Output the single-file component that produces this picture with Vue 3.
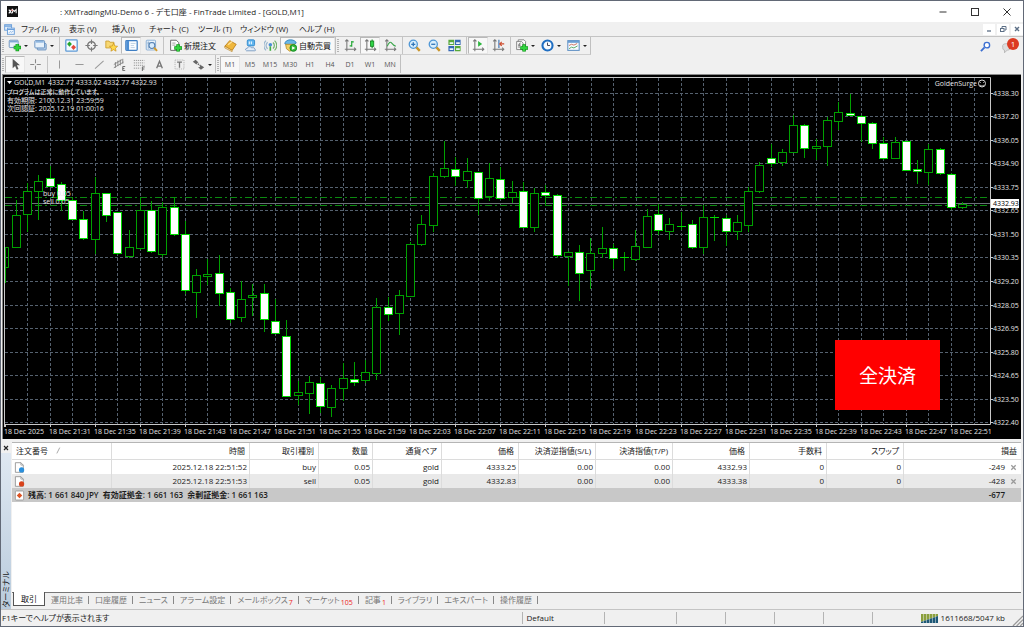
<script setup>
const menus = ['ファイル (F)', '表示 (V)', '挿入(I)', 'チャート (C)', 'ツール (T)', 'ウィンドウ (W)', 'ヘルプ (H)']

const mainGroups = [
  [
    { icon: 'newchart', label: '新規チャート', drop: true },
    { icon: 'profiles', label: 'プロファイル', drop: true }
  ],
  [
    { icon: 'market', label: '気配値' },
    { icon: 'target', label: 'データウィンドウ' },
    { icon: 'folder', label: 'ナビゲーター' },
    { icon: 'terminal', label: 'ターミナル', on: true },
    { icon: 'tester', label: 'ストラテジーテスター' }
  ],
  [
    { icon: 'order', label: '新規注文', text: true },
    { icon: 'book', label: 'メタエディター' },
    { icon: 'community', label: 'コミュニティ' },
    { icon: 'signal', label: 'シグナル' },
    { icon: 'auto', label: '自動売買', text: true, on: true }
  ]
]
const chartGroups = [
  [
    { icon: 'bars', label: 'バーチャート' },
    { icon: 'candles', label: 'ローソク足', on: true },
    { icon: 'line', label: 'ラインチャート' }
  ],
  [
    { icon: 'zoomin', label: '拡大' },
    { icon: 'zoomout', label: '縮小' },
    { icon: 'tile', label: '整列' }
  ],
  [
    { icon: 'scroll', label: '自動スクロール', on: true },
    { icon: 'shift', label: 'チャートシフト' }
  ],
  [
    { icon: 'indicator', label: 'インディケータ', drop: true },
    { icon: 'clock', label: '時間足設定', drop: true },
    { icon: 'template', label: '定型チャート', drop: true }
  ]
]
const drawGroups = [
  [
    { icon: 'cursor', label: 'カーソル', on: true },
    { icon: 'cross', label: 'クロスヘア' }
  ],
  [
    { icon: 'vline', label: '垂直線' },
    { icon: 'hline', label: '水平線' },
    { icon: 'trend', label: 'トレンドライン' },
    { icon: 'channel', label: 'チャネル' },
    { icon: 'fibo', label: 'フィボナッチ' },
    { icon: 'texta', label: 'テキスト' },
    { icon: 'textt', label: 'ラベル' },
    { icon: 'arrows', label: '矢印', drop: true }
  ]
]
const frames = ['M1', 'M5', 'M15', 'M30', 'H1', 'H4', 'D1', 'W1', 'MN']

// high, body top, body bottom, low, body kind (1 = bearish, 0 = bullish)
const candles = [
  [247, 247, 267, 282, 0], [200, 215, 247, 247, 0], [183, 191, 214, 231, 0], [175, 181, 191, 219, 0],
  [166, 178, 186, 186, 1], [182, 184, 200, 210, 1], [197, 200, 219, 219, 1], [211, 219, 238, 239, 1],
  [177, 193, 239, 253, 0], [193, 193, 215, 221, 1], [212, 212, 253, 254, 1], [230, 247, 256, 257, 0],
  [198, 210, 248, 249, 0], [201, 210, 251, 252, 1], [202, 207, 254, 256, 0], [197, 207, 234, 235, 1],
  [221, 234, 290, 293, 1], [269, 275, 292, 317, 0], [259, 274, 276, 284, 0], [255, 273, 293, 305, 1],
  [288, 292, 319, 322, 1], [281, 299, 317, 321, 0], [284, 295, 297, 315, 0], [284, 293, 319, 331, 1],
  [299, 321, 333, 333, 1], [320, 336, 396, 396, 1], [381, 392, 395, 404, 0], [376, 382, 393, 413, 0],
  [377, 383, 406, 412, 1], [385, 388, 407, 416, 0], [363, 378, 388, 400, 0], [362, 379, 382, 385, 1],
  [360, 372, 380, 382, 0], [298, 307, 373, 379, 0], [297, 307, 314, 320, 1], [290, 295, 313, 334, 0],
  [242, 244, 296, 296, 0], [215, 224, 244, 245, 0], [173, 176, 225, 231, 0], [141, 168, 176, 177, 0],
  [157, 169, 176, 185, 1], [158, 171, 180, 187, 0], [172, 172, 198, 214, 1], [163, 178, 196, 200, 0],
  [167, 179, 198, 199, 1], [181, 192, 197, 202, 0], [182, 191, 227, 227, 1], [188, 193, 227, 231, 0],
  [185, 192, 195, 205, 1], [194, 195, 255, 257, 1], [251, 252, 256, 285, 0], [245, 252, 273, 300, 1],
  [238, 253, 270, 288, 0], [227, 248, 253, 257, 0], [244, 248, 258, 268, 1], [252, 257, 257, 270, 0],
  [230, 246, 259, 260, 0], [209, 216, 247, 247, 0], [204, 214, 230, 234, 1], [218, 224, 231, 239, 0],
  [212, 226, 226, 229, 0], [220, 224, 247, 248, 1], [205, 217, 247, 253, 0], [215, 217, 217, 240, 0],
  [215, 218, 231, 245, 1], [215, 222, 231, 239, 0], [187, 191, 225, 231, 0], [162, 165, 191, 192, 0],
  [144, 158, 163, 166, 1], [149, 152, 162, 165, 0], [115, 125, 152, 152, 0], [124, 125, 148, 157, 1],
  [139, 146, 148, 159, 0], [117, 120, 146, 165, 0], [102, 112, 121, 129, 0], [94, 113, 115, 115, 1],
  [115, 116, 123, 141, 1], [122, 123, 143, 148, 1], [137, 143, 158, 159, 1], [137, 142, 158, 158, 0],
  [141, 141, 170, 170, 1], [160, 169, 171, 183, 1], [144, 149, 172, 184, 0], [148, 149, 173, 174, 1],
  [173, 174, 207, 209, 1], [202, 204, 207, 208, 0]
].map(([high, top, bottom, low, bear], i) => ({ x: Math.round(4.6 + i * 11.266), high, top, bottom, low, bear }))

const prices = ['4338.30', '4337.20', '4336.05', '4334.90', '4333.75', '4332.65', '4331.50', '4330.35',
  '4329.20', '4328.05', '4326.95', '4325.80', '4324.65', '4323.50', '4322.40']
  .map((label, i) => ({ label, y: Math.round(92.5 + i * 23.57) }))
const columns = Array.from({ length: 43 }, (_, i) => Math.round(27.2 + i * 22.532))
const times = Array.from({ length: 22 }, (_, i) => {
  const m = 27 + i * 4
  return {
    x: Math.round(4.6 + i * 45.065),
    label: i ? `18 Dec ${21 + Math.floor(m / 60)}:${String(m % 60).padStart(2, '0')}` : '18 Dec 2025'
  }
})

const heads = ['時間', '取引種別', '数量', '通貨ペア', '価格', '決済逆指値(S/L)', '決済指値(T/P)', '価格', '手数料', 'スワップ']
const orders = [
  { kind: 'buy', cells: ['2025.12.18 22:51:52', 'buy', '0.05', 'gold', '4333.25', '0.00', '0.00', '4332.93', '0', '0'], profit: '-249' },
  { kind: 'sell', cells: ['2025.12.18 22:51:53', 'sell', '0.05', 'gold', '4332.83', '0.00', '0.00', '4333.38', '0', '0'], profit: '-428' }
]
const tabs = [['運用比率'], ['口座履歴'], ['ニュース'], ['アラーム設定'], ['メールボックス', '7'], ['マーケット', '105'],
  ['記事', '1'], ['ライブラリ'], ['エキスパート'], ['操作履歴']]
</script>

<template>
  <div class="window">
    <svg class="defs" aria-hidden="true">
      <symbol id="i-newchart" viewBox="0 0 16 16"><rect x="1.5" y="1.5" width="11" height="9" rx="1" fill="#e9f2fb" stroke="#5b86b8"/><path d="M2 3.2h10" stroke="#7fa8d6" stroke-width="2"/><path d="M7 10.500h9M11.500 6v9" stroke="#118a1a" stroke-width="4.400"/><path d="M7.500 10.500h8M11.500 6.500v8" stroke="#2fd23c" stroke-width="2.800"/></symbol>
      <symbol id="i-profiles" viewBox="0 0 16 16"><rect x="4" y="5.500" width="11" height="8" rx="1" fill="#b9d0ea" stroke="#5b86b8"/><rect x="1" y="2" width="12" height="9" rx="1" fill="#e6f1fb" stroke="#4f80b6"/><path d="M2 3.500h10" stroke="#8db5df" stroke-width="2"/></symbol>
      <symbol id="i-market" viewBox="0 0 16 16"><rect x="1" y="1" width="14" height="14" rx="1" fill="#f5faff" stroke="#5f9bd6" stroke-width="1.600"/><path d="M5.500 3l3 3.200-3 3.200-3-3.200z" fill="#24a52c"/><path d="M10.500 7l3 3.200-3 3.200-3-3.200z" fill="#e4483a"/></symbol>
      <symbol id="i-target" viewBox="0 0 16 16"><circle cx="8" cy="8" r="4.700" fill="none" stroke="#7a7a7a" stroke-width="1.800"/><path d="M8 0.500v5.500M8 10v5.500M0.500 8H6M10 8h5.500" stroke="#7a7a7a" stroke-width="1.400"/></symbol>
      <symbol id="i-folder" viewBox="0 0 16 16"><path d="M1 2.500h4l1 1.500h5V11H1z" fill="#f8d872" stroke="#c89a2a"/><path d="M10.500 5l1.500 3.500 3.500.500-2.600 2.400.700 3.600-3.100-1.900-3.200 1.900.700-3.600L5.500 9l3.600-.500z" fill="#ffd84a" stroke="#c58d17" stroke-width=".8"/></symbol>
      <symbol id="i-terminal" viewBox="0 0 16 16"><rect x="1" y="2" width="14" height="12" rx="1" fill="#fafdff" stroke="#3f7fc4" stroke-width="1.500"/><rect x="1.500" y="2.500" width="3.500" height="11" fill="#4d8ed3"/><path d="M7 5.500h6M7 8h4M7 10.500h5" stroke="#b8cde2"/></symbol>
      <symbol id="i-tester" viewBox="0 0 16 16"><rect x="1.500" y="1.500" width="11.500" height="12" rx="1" fill="#eaf3fc" stroke="#79a4d0"/><path d="M3 5h8M4 3v9" stroke="#7aa0c8"/><circle cx="8.500" cy="8" r="3.600" fill="#d5eafc" fill-opacity=".8" stroke="#5682b4" stroke-width="1.300"/><path d="M11.200 10.800l3.600 3.800" stroke="#d19b2d" stroke-width="2.400"/></symbol>
      <symbol id="i-order" viewBox="0 0 16 16"><path d="M2 1.500h7l3 3v9.500H2z" fill="#fff" stroke="#6b6b6b" stroke-width="1.200"/><path d="M4 5h4M4 7.500h4" stroke="#8a8a8a"/><path d="M6.500 11h9.500M11.200 6.500v9" stroke="#108a19" stroke-width="4.400"/><path d="M7 11h8.500M11.200 7v8" stroke="#31d33e" stroke-width="2.800"/></symbol>
      <symbol id="i-book" viewBox="0 0 16 16"><path d="M1 9l6-7 8 4.500-5 7.500z" fill="#efb73d" stroke="#b77a12"/><path d="M1 9l9 5v1.500L1 11z" fill="#fff3cf" stroke="#b77a12" stroke-width=".8"/><path d="M5 7l5-4" stroke="#ffe39a" stroke-width="1.400"/></symbol>
      <symbol id="i-community" viewBox="0 0 16 16"><rect x="4" y="1" width="9" height="7.500" rx="1.500" fill="#61b5ee" stroke="#2581c9"/><path d="M6.500 3v3.500M9 3v3.500" stroke="#fff" stroke-width="1.200"/><path d="M3 14.500c-2-1-1-3.500 1-3 .500-2.500 4.500-2.800 5.500-.500 2-1 4 0 3.500 1.500 1.800.300 1.500 2 .300 2z" fill="#e3edf8" stroke="#6e93bd"/></symbol>
      <symbol id="i-signal" viewBox="0 0 16 16"><path d="M4.500 12A5 5 0 0 1 4.500 4M2.500 14A8 8 0 0 1 2.500 2" fill="none" stroke="#9ab6cf" stroke-width="1.500"/><path d="M11 4.200a5 5 0 0 1 0 7.600M13 2a8 8 0 0 1 0 12" fill="none" stroke="#74b36e" stroke-width="1.500"/><circle cx="7.800" cy="7" r="2.200" fill="#4c8fd6"/><path d="M7.800 9v5.500" stroke="#3fae42" stroke-width="2"/></symbol>
      <symbol id="i-auto" viewBox="0 0 16 16"><path d="M1 6c0-3 3-5 7-5s7 2 7 4l-3 2H4z" fill="#69b7e6" stroke="#2d7eb5"/><path d="M2 6.500h11l-2 7-4 1.500-4-3z" fill="#f3d063" stroke="#b98a24"/><circle cx="11.500" cy="11" r="4.200" fill="#35b83c" stroke="#0b851a"/><path d="M10 8.800v4.400l3.800-2.200z" fill="#fff"/></symbol>
      <symbol id="i-bars" viewBox="0 0 16 16"><path d="M3.500 1v14M1 12.500h13M1.500 3l2-2 2 2M12.500 10.500l2 2-2 2" fill="none" stroke="#777" stroke-width="1.300"/><path d="M9.500 2.500v7M9.500 3.500h2.500M7 8.500h2.500" stroke="#1fa632" stroke-width="1.400"/></symbol>
      <symbol id="i-candles" viewBox="0 0 16 16"><path d="M3.500 1v14M1 12.500h13M1.500 3l2-2 2 2M12.500 10.500l2 2-2 2" fill="none" stroke="#777" stroke-width="1.300"/><path d="M10 0.500v11" stroke="#13821f" stroke-width="1.300"/><rect x="8" y="2.500" width="4" height="6.500" fill="#2fd546" stroke="#13821f"/></symbol>
      <symbol id="i-line" viewBox="0 0 16 16"><path d="M3.500 1v14M1 12.500h13M1.500 3l2-2 2 2M12.500 10.500l2 2-2 2" fill="none" stroke="#777" stroke-width="1.300"/><path d="M4 9c2-5 4-6 5.500-4s2.500 3 5 4" fill="none" stroke="#3ba64b" stroke-width="1.300"/></symbol>
      <symbol id="i-zoomin" viewBox="0 0 16 16"><path d="M9.500 9.500l5 5" stroke="#c9952b" stroke-width="3"/><circle cx="6.500" cy="6.500" r="5" fill="#d9effc" stroke="#4f97d6" stroke-width="1.600"/><path d="M4 6.500h5M6.500 4v5" stroke="#2f74b8" stroke-width="1.600"/></symbol>
      <symbol id="i-zoomout" viewBox="0 0 16 16"><path d="M9.500 9.500l5 5" stroke="#c9952b" stroke-width="3"/><circle cx="6.500" cy="6.500" r="5" fill="#d9effc" stroke="#4f97d6" stroke-width="1.600"/><path d="M4 6.500h5" stroke="#2f74b8" stroke-width="1.600"/></symbol>
      <symbol id="i-tile" viewBox="0 0 16 16"><path d="M0.500 1h7v6.500h-7zM8.500 8.500h7V15h-7z" fill="#58a83a"/><path d="M8.500 1h7v6.500h-7zM0.500 8.500h7V15h-7z" fill="#3468b4"/><path d="M2 4h4.500v2H2zM10 4h4.500v2H10zM2 11.500h4.500v2H2zM10 11.500h4.500v2H10z" fill="#eef5fb"/></symbol>
      <symbol id="i-scroll" viewBox="0 0 16 16"><path d="M3.500 1v14M1 12.500h13M1.500 3l2-2 2 2M12.500 10.500l2 2-2 2" fill="none" stroke="#777" stroke-width="1.300"/><path d="M7.500 2.500l5 3.500-5 3.500z" fill="#2cb53d"/></symbol>
      <symbol id="i-shift" viewBox="0 0 16 16"><path d="M3.500 1v14M1 12.500h13M1.500 3l2-2 2 2M12.500 10.500l2 2-2 2" fill="none" stroke="#777" stroke-width="1.300"/><path d="M8.500 1v10" stroke="#3b75b5" stroke-width="1.400"/><path d="M15 6h-5M12 3.500L9.500 6 12 8.500" fill="none" stroke="#cd4a2b" stroke-width="1.400"/></symbol>
      <symbol id="i-indicator" viewBox="0 0 16 16"><path d="M4 1h7l2 2v9H4z" fill="#fff" stroke="#777"/><path d="M2 3h6l2 2v8H2z" fill="#f4f4f4" stroke="#777"/><path d="M7 5c-2 0-2 1-2 6M4 7.500h3" fill="none" stroke="#555"/><path d="M6.500 11h9.500M11.200 6.500v9" stroke="#108a19" stroke-width="4.400"/><path d="M7 11h8.500M11.200 7v8" stroke="#31d33e" stroke-width="2.800"/></symbol>
      <symbol id="i-clock" viewBox="0 0 16 16"><circle cx="8" cy="8" r="6.200" fill="#f7fbff" stroke="#1f6ec2" stroke-width="2.600"/><path d="M8 4.500V8h3" fill="none" stroke="#445" stroke-width="1.200"/></symbol>
      <symbol id="i-template" viewBox="0 0 16 16"><rect x="1" y="2" width="14" height="12" fill="#f7fbff" stroke="#6091c4" stroke-width="1.300"/><path d="M1 3.500h14" stroke="#6a9dd2" stroke-width="2.400"/><path d="M2.500 8l3-1.500 3 1 4-2" fill="none" stroke="#c65a42"/><path d="M2.500 12l3-2 3 1 4.500-2.500" fill="none" stroke="#3fa04b"/></symbol>
      <symbol id="i-cursor" viewBox="0 0 16 16"><path d="M4.500 1v11.500l3-2.700 2 4.700 2.200-1-2-4.500h3.800z" fill="#555"/></symbol>
      <symbol id="i-cross" viewBox="0 0 16 16"><path d="M8 1.500v5M8 9.500v5M1.500 8h5M9.500 8h5" stroke="#888" stroke-width="1.300"/></symbol>
      <symbol id="i-vline" viewBox="0 0 16 16"><path d="M8 3v10" stroke="#999" stroke-width="1.300"/></symbol>
      <symbol id="i-hline" viewBox="0 0 16 16"><path d="M3 8h10" stroke="#999" stroke-width="1.300"/></symbol>
      <symbol id="i-trend" viewBox="0 0 16 16"><path d="M2.500 13L13 3.500" stroke="#999" stroke-width="1.300"/></symbol>
      <symbol id="i-channel" viewBox="0 0 16 16"><path d="M1 8L11 2M1 12L13 5M3 5v7M6 3v7M9 2v7M12 1v6" stroke="#888" stroke-width="1.200"/><path d="M15 10.500h-3v5H15M12 13H14" fill="none" stroke="#666" stroke-width="1.200"/></symbol>
      <symbol id="i-fibo" viewBox="0 0 16 16"><path d="M1 3h13M1 6h13M1 9h13M1 12.500h8" stroke="#999" stroke-width="1.200" stroke-dasharray="1.500 1"/><path d="M14.500 11H11.500v5M11.500 13.500h2.500" fill="none" stroke="#666" stroke-width="1.200"/></symbol>
      <symbol id="i-texta" viewBox="0 0 16 16"><path d="M4.500 12.500L8 4l3.500 8.500M6 10h4" fill="none" stroke="#777" stroke-width="1.700"/></symbol>
      <symbol id="i-textt" viewBox="0 0 16 16"><rect x="2.500" y="2.500" width="11" height="11" fill="none" stroke="#aaa" stroke-dasharray="1.500 1.200"/><path d="M5 5h6M8 5v7" stroke="#777" stroke-width="1.600"/></symbol>
      <symbol id="i-arrows" viewBox="0 0 16 16"><path d="M4.500 2l3.500 3.500-1.500.500L5.500 8 1 4.500zM11 14.500l-3.500-3 2-.500 1-2.500 4.500 3z" fill="#666"/><path d="M7 7l3.500 2.500" stroke="#666" stroke-width="1.600" stroke-dasharray="2 1"/></symbol>
      <symbol id="i-doc" viewBox="0 0 16 16"><path d="M2 1h8l3.500 3.500V15H2z" fill="#fff" stroke="#8c8c8c" stroke-width="1.200"/><path d="M10 1v3.500h3.500" fill="none" stroke="#8c8c8c"/></symbol>
    </svg>

    <header class="title">
      <svg class="logo" viewBox="0 0 12 12" role="img" aria-label="XM"><rect width="12" height="12" fill="#111"/><path d="M2 4l3 4M5 4L2 8" stroke="#fff" stroke-width="1.200"/><path d="M6 8V4l2 2 2-2v4" fill="none" stroke="#eee" stroke-width="1.200"/><path d="M4.500 4L6 5" stroke="#e33"/></svg>
      <h1>: XMTradingMU-Demo 6 - デモ口座 - FinTrade Limited - [GOLD,M1]</h1>
      <div class="winbtns">
        <button aria-label="最小化"><svg viewBox="0 0 8 8"><path d="M0.500 4h7" stroke="#333"/></svg></button>
        <button aria-label="最大化"><svg viewBox="0 0 8 8"><rect x=".5" y=".5" width="7" height="7" fill="none" stroke="#333"/></svg></button>
        <button aria-label="閉じる"><svg viewBox="0 0 8 8"><path d="M0.500 0.500l7 7M7.500 0.500l-7 7" stroke="#333"/></svg></button>
      </div>
    </header>

    <nav class="menu">
      <svg class="menuicon" viewBox="0 0 16 16"><rect x="1" y="1" width="10" height="8" fill="#e8f2fc" stroke="#6b9fda" stroke-width="1.400"/><path d="M1 3h10" stroke="#6b9fda" stroke-width="2"/><rect x="5" y="6" width="10" height="9" fill="#f5faff" stroke="#6b9fda" stroke-width="1.400"/><path d="M5 8h10" stroke="#6b9fda" stroke-width="1.600"/><path d="M7 13l2-2 2 1 3-2" fill="none" stroke="#6b9fda"/></svg>
      <button v-for="(m, i) in menus" :key="m" :class="'m' + i">{{ m }}</button>
      <div class="mdi">
        <button aria-label="チャート最小化"><svg viewBox="0 0 8 8"><path d="M2 6h4" stroke="#5c6f86" stroke-width="1.300"/></svg></button>
        <button aria-label="元に戻す"><svg viewBox="0 0 8 8"><path d="M3 3V1.500h4V5H5.500" fill="none" stroke="#5c6f86"/><rect x="1.500" y="3.500" width="3.500" height="3" fill="none" stroke="#5c6f86"/></svg></button>
        <button aria-label="チャートを閉じる"><svg viewBox="0 0 8 8"><path d="M2 2l4 4M6 2L2 6" stroke="#5c6f86" stroke-width="1.400"/></svg></button>
      </div>
    </nav>

    <div class="bars">
      <div class="bar">
        <div class="strip">
          <i class="grip"></i>
          <div v-for="(g, gi) in mainGroups" :key="gi" class="group">
            <button v-for="b in g" :key="b.icon" :class="['tool', { on: b.on, drop: b.drop, wide: b.text }]" :aria-label="b.label">
              <svg class="ic"><use :href="'#i-' + b.icon" /></svg><span v-if="b.text">{{ b.label }}</span>
            </button>
          </div>
        </div>
        <div class="strip">
          <i class="grip"></i>
          <div v-for="(g, gi) in chartGroups" :key="gi" class="group">
            <button v-for="b in g" :key="b.icon" :class="['tool', { on: b.on, drop: b.drop }]" :aria-label="b.label">
              <svg class="ic"><use :href="'#i-' + b.icon" /></svg>
            </button>
          </div>
        </div>
      </div>
      <div class="bar">
        <div class="strip">
          <i class="grip"></i>
          <div v-for="(g, gi) in drawGroups" :key="gi" class="group">
            <button v-for="b in g" :key="b.icon" :class="['tool', { on: b.on, drop: b.drop }]" :aria-label="b.label">
              <svg class="ic"><use :href="'#i-' + b.icon" /></svg>
            </button>
          </div>
        </div>
        <div class="strip">
          <i class="grip"></i>
          <div class="group">
            <button v-for="(f, i) in frames" :key="f" :class="['tool', 'frame', { on: i === 0 }]">{{ f }}</button>
          </div>
        </div>
      </div>
      <div class="corner">
        <button aria-label="検索"><svg viewBox="0 0 12 12"><path d="M1 11l4-4" stroke="#3c6fd1" stroke-width="2"/><circle cx="7.500" cy="4.500" r="3" fill="#fff" stroke="#3c6fd1" stroke-width="1.500"/></svg></button>
        <button class="bell" aria-label="通知"><svg viewBox="0 0 20 16"><path d="M3 7c0-3 9-3 9 1s-3 4-4 4l-3 3v-3c-2 0-2-2-2-5z" fill="#ddd" stroke="#b5b5b5"/></svg><span>1</span></button>
      </div>
    </div>

    <main class="chart">
      <svg class="plot" viewBox="2 74 1019 365" role="img" aria-label="GOLD,M1">
        <rect x="2" y="74" width="1019" height="365" fill="#000" />
        <path d="M2 74.500h1019M2.500 74v365" stroke="#8a8a8a" />
        <g class="grid">
          <path v-for="x in columns" :key="'c' + x" :d="`M${x + 0.5} 78V424`" />
          <path v-for="p in prices" :key="'p' + p.y" :d="`M5 ${p.y + 0.5}H990`" />
        </g>
        <g class="levels">
          <path d="M5 197.500H990" /><path d="M5 205.500H990" />
        </g>
        <path d="M5 203.500H990" stroke="#6a6f78" />
        <g class="candle">
          <template v-for="(c, i) in candles" :key="i">
            <path :d="`M${c.x + 0.5} ${c.high}V${c.low + 1}`" />
            <path v-if="!i" :d="`M5 ${c.top + 0.5}H8.500V${c.bottom + 0.5}H5`" />
            <path v-else-if="c.top === c.bottom" class="doji" :d="`M${c.x - 4} ${c.top + 0.5}h9`" />
            <rect v-else :class="{ bear: c.bear }" :x="c.x - 3.5" :y="c.top + 0.5" width="8" :height="c.bottom - c.top" />
          </template>
        </g>
        <path d="M4.500 427V77.500H990.500V424.500H4.500" fill="none" stroke="#c8c8c8" />
        <g class="axis">
          <path v-for="p in prices" :key="p.y" :d="`M990 ${p.y + 0.5}h3`" />
          <path v-for="t in times" :key="t.x" :d="`M${t.x + 0.5} 424v3`" />
        </g>
        <g class="label">
          <text v-for="p in prices" :key="p.y" x="993" :y="p.y + 3">{{ p.label }}</text>
          <text v-for="t in times" :key="t.x" :x="t.x - 1" y="434">{{ t.label }}</text>
          <path d="M7 81h5l-2.500 3z" fill="#fff" />
          <text x="14" y="85">GOLD,M1</text>
          <text x="48" y="85">4332.77 4333.02 4332.77 4332.93</text>
          <text class="note" x="7" y="94">プログラムは正常に動作しています。</text>
          <text x="7" y="103">有効期限: 2100.12.31 23:59:59</text>
          <text x="7" y="111">次回認証: 2025.12.19 01:00:16</text>
          <text x="43" y="196">buy 0.05</text>
          <text x="43" y="204">sell 0.05</text>
          <text x="977" y="86" text-anchor="end">GoldenSurge</text>
        </g>
        <g fill="none" stroke="#ddd"><circle cx="982" cy="83.500" r="3.500" /><path d="M980 85c1 1.300 3 1.300 4 0M980.500 82v.800M983.500 82v.800" stroke-width=".8" /></g>
        <rect x="991" y="199" width="28" height="9" fill="#fff" />
        <text class="current" x="993" y="206">4332.93</text>
      </svg>
      <button class="closeall">全決済</button>
    </main>

    <section class="terminal">
      <aside class="gutter">
        <button aria-label="閉じる"><svg viewBox="0 0 6 6"><path d="M1 1l4 4M5 1L1 5" stroke="#222" stroke-width="1.200"/></svg></button>
        <div class="side"><span>ターミナル</span></div>
      </aside>
      <div class="body">
        <div class="list">
          <table>
            <colgroup><col class="w-id"><col class="w-time"><col class="w-mid"><col class="w-qty"><col class="w-mid"><col v-for="n in 6" :key="n" class="w-num"><col></colgroup>
            <thead>
              <tr><th class="first">注文番号 <svg viewBox="0 0 6 8"><path d="M1 7.500L4.500 0.500" stroke="#999"/></svg></th><th v-for="(h, i) in heads" :key="i">{{ h }}</th><th class="last">損益</th></tr>
            </thead>
            <tbody>
              <tr v-for="o in orders" :key="o.kind" :class="o.kind">
                <td class="first"><svg class="doc" viewBox="0 0 16 16"><use href="#i-doc" /><circle :class="o.kind" cx="11" cy="11.500" r="3.800" /></svg></td>
                <td v-for="(c, i) in o.cells" :key="i">{{ c }}</td>
                <td class="profit">{{ o.profit }}<button aria-label="決済"><svg viewBox="0 0 8 8"><path d="M1.500 1.500l5 5M6.500 1.500l-5 5" stroke="#9a9a9a" stroke-width="1.500"/></svg></button></td>
              </tr>
              <tr class="total">
                <td class="first" colspan="11"><svg class="doc" viewBox="0 0 16 16"><rect x="2" y="1.500" width="12" height="13" rx="1" fill="#fff" stroke="#888"/><path d="M8 4l4 4-4 4-4-4z" fill="#dd5424"/></svg><span>残高: 1 661 840 JPY&nbsp; 有効証拠金: 1 661 163&nbsp; 余剰証拠金: 1 661 163</span></td>
                <td class="profit">-677</td>
              </tr>
            </tbody>
          </table>
        </div>
        <div class="tabs">
          <button class="active">取引</button>
          <button v-for="t in tabs" :key="t[0]">{{ t[0] }}<sub v-if="t[1]">{{ t[1] }}</sub></button>
        </div>
      </div>
    </section>

    <footer class="status">
      <span class="help">F1キーでヘルプが表示されます</span>
      <span class="profile">Default</span>
      <i class="s1"></i><i></i><i></i><i></i><i></i><i></i>
      <span class="net"><svg viewBox="0 0 17 10"><path d="M0 1h17v2L0 9z" fill="#8a9f3c"/><path d="M0 9l17-6v7H0z" fill="#1d5877"/><path d="M2.500 0v10M5.500 0v10M8.500 0v10M11.500 0v10M14.500 0v10" stroke="#efefef" stroke-width=".5"/></svg>1611668/5047 kb</span>
      <svg class="resize" viewBox="0 0 12 12"><path d="M1 12L12 1M5 12l7-7M9 12l3-3" stroke="#999" stroke-width="1.300"/></svg>
    </footer>
  </div>
</template>

<style>
body { margin: 0; background: #f0f0f0; }
</style>

<style scoped>
.window {
  box-sizing: border-box;
  min-height: 100vh;
  display: flex;
  flex-direction: column;
  border: 1px solid #626976;
  background: #f0f0f0;
  color: #1c1c1c;
  font: 8px/12px "Open Sans", "Noto Sans CJK JP", sans-serif;
  font-feature-settings: "palt";
}
.defs { display: block; width: 0; height: 0; }
button { margin: 0; padding: 0; border: 0; background: none; color: inherit; font: inherit; font-feature-settings: inherit; white-space: nowrap; }
svg { display: block; }

.title { height: 21px; display: flex; align-items: center; background: #fff; }
.logo { width: 11px; height: 11px; margin-left: 6px; }
h1 { flex: 1; margin: 0 0 0 42px; font-size: 8px; font-weight: 400; white-space: nowrap; }
.winbtns { display: flex; }
.winbtns button { width: 32px; height: 20px; display: grid; place-items: center; }
.winbtns svg { width: 8px; height: 8px; }

.menu { height: 14px; display: flex; align-items: center; border-bottom: 1px solid #c4c4c4; }
.menuicon { width: 11px; height: 11px; margin: 0 6px 0 3px; }
.menu > button { text-align: left; }
.m0 { width: 48px; } .m1 { width: 43px; } .m2 { width: 37px; } .m3 { width: 49px; }
.m4 { width: 42px; } .m5 { width: 59px; } .m6 { width: 40px; }
.mdi { display: flex; gap: 2px; margin-left: auto; }
.mdi button { width: 12px; height: 11px; display: grid; place-items: center; background: #fff; }
.mdi svg { width: 8px; height: 8px; }

.bars { position: relative; padding-bottom: 1px; }
.bar { display: flex; height: 18px; }
.strip { display: flex; border-right: 1px solid #c0c0c0; border-bottom: 1px solid #cfcfcf; }
.bar + .bar .strip { border-bottom: 0; padding-top: 1px; }
.grip { width: 2px; margin: 2px 1px 2px 1px; background: repeating-linear-gradient(#b4b4b4 0 1px, #f0f0f0 1px 2px); }
.group { display: flex; }
.group + .group { border-left: 1px solid #c4c4c4; margin-left: 2px; padding-left: 1px; }
.tool { position: relative; box-sizing: border-box; width: 20px; height: 17px; display: flex; align-items: center; justify-content: center; gap: 2px; border: 1px solid transparent; }
.tool.on { background: #f8f8f8; border-color: #b9b9b9 #e6e6e6 #e6e6e6 #b9b9b9; }
.tool.drop { width: 26px; justify-content: flex-start; padding-left: 2px; }
.tool.drop::after { content: ""; margin-left: 1px; border: 2px solid transparent; border-top-color: #222; border-bottom: 0; }
.tool.wide { width: 55px; color: #111; }
.ic { width: 13px; height: 13px; flex: none; }
.frame { font-size: 7px; color: #555; }
.corner { position: absolute; top: 0; right: 3px; height: 18px; display: flex; align-items: center; gap: 9px; }
.corner svg { width: 11px; height: 11px; }
.bell { position: relative; width: 20px; height: 16px; }
.bell svg { width: 18px; height: 15px; }
.bell span { position: absolute; top: 0; right: 1px; width: 12px; height: 12px; border-radius: 50%; background: #dc3b22; color: #fff; text-align: center; }

.chart { position: relative; margin: 0 2px 0 1px; }
.plot { width: 100%; height: auto; }
.grid path { stroke: #55616f; stroke-dasharray: 3 2; }
.levels path { stroke: #0b8a10; stroke-dasharray: 7 3 2 3; }
.candle path { stroke: #00a000; fill: none; }
.candle .doji { stroke: #00d800; }
.candle rect { fill: #000; stroke: #00a000; }
.candle .bear { fill: #fff; stroke: #00d800; }
.axis path { stroke: #c8c8c8; }
.label { fill: #e4e4e4; font-size: 7px; }
.note { font-size: 6px; font-weight: 500; }
.current { fill: #000; font-size: 7px; }
.closeall { position: absolute; left: 81.7%; top: 72.8%; width: 10.4%; height: 19.3%; padding-top: 2px; background: #f00; color: #fff; font-size: 19px; line-height: 24px; font-feature-settings: normal; }

.terminal { flex: 1; display: flex; margin-top: 3px; }
.gutter { width: 11px; display: flex; flex-direction: column; }
.gutter button { width: 9px; height: 11px; display: grid; place-items: center; }
.gutter button svg { width: 6px; height: 6px; }
.side { flex: 1; width: 10px; display: flex; align-items: flex-end; justify-content: center; background: linear-gradient(#dfe8f2, #b9cbdc); }
.side span { writing-mode: vertical-rl; text-orientation: sideways; transform: rotate(180deg); line-height: 10px; padding-top: 1px; }
.body { flex: 1; min-width: 0; display: flex; flex-direction: column; margin-right: 2px; }
.list { flex: 1; background: #fff; border-top: 1px solid #b5b5b5; border-bottom: 1px solid #777; }
table { width: 100%; table-layout: fixed; border-collapse: separate; border-spacing: 0; }
.w-id { width: 100px; } .w-time { width: 138px; } .w-mid { width: 69px; } .w-qty { width: 54px; } .w-num { width: 77px; }
th, td { box-sizing: border-box; padding: 0 2px 0 0; text-align: right; font-weight: 400; white-space: nowrap; border-right: 1px solid #dcdcdc; }
th { height: 17px; padding-right: 4px; border-bottom: 1px solid #dcdcdc; }
td { height: 14px; }
.first { text-align: left; padding-left: 2px; }
th.first { padding-left: 4px; }
th svg { display: inline-block; width: 5px; height: 7px; margin-left: 6px; }
th.last { padding-right: 4px; border-right: 0; }
.doc { width: 11px; height: 11px; }
circle.buy { fill: #2a8fdc; }
circle.sell { fill: #d9431c; }
tr.sell td { background: #e9e9e9; }
.total td { background: #c8c8c8; border: 0; font-weight: 600; }
.total .first svg, .total .first span { display: inline-block; vertical-align: middle; }
.total span { margin-left: 3px; }
td.profit { border-right: 0; padding-right: 16px; position: relative; }
.profit button { position: absolute; right: 4px; top: 4px; }
.profit button svg { width: 7px; height: 7px; }

.tabs { display: flex; height: 16px; padding-left: 1px; color: #777; }
.tabs button { position: relative; height: 14px; padding: 0 6px; }
.tabs button:not(.active)::after { content: ""; position: absolute; right: 0; top: 3px; height: 8px; border-right: 1px solid #888; }
.tabs .active { box-sizing: border-box; width: 32px; margin-top: -1px; background: #fff; color: #111; border: 1px solid #555; border-top: 0; }
.tabs sub { color: #e22; font-size: 7px; line-height: 7px; margin-left: 1px; vertical-align: -2px; }

.status { position: relative; height: 16px; display: flex; align-items: center; border-top: 1px solid #c4c4c4; }
.help { flex: 1; padding-left: 1px; }
.profile { box-sizing: border-box; width: 82px; padding-left: 4px; border-left: 1px solid #b4b4b4; }
.status i { height: 12px; width: 48px; border-left: 1px solid #b4b4b4; }
.status .s1 { width: 71px; }
.net { display: flex; gap: 3px; align-items: center; padding-right: 18px; }
.net svg { width: 17px; height: 10px; }
.resize { position: absolute; right: 0; bottom: 0; width: 11px; height: 11px; }
</style>
